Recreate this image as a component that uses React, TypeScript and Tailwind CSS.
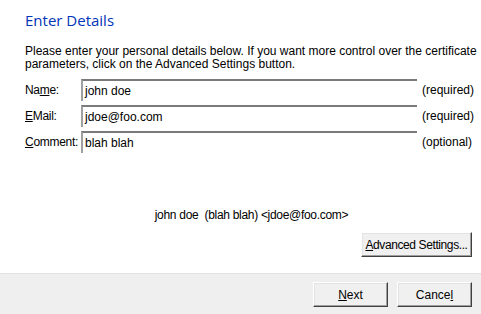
const font = { fontFamily: "'Liberation Sans', Tahoma, Arial, sans-serif" };

const Field = ({
  label,
  mnemonic,
  rest,
  value,
  hint,
}: {
  label: string;
  mnemonic: string;
  rest: string;
  value: string;
  hint: string;
}) => (
  <div className="flex items-center h-[26px]">
    <div className="w-[56px] shrink-0 text-[12px] tracking-[-0.3px] text-black">
      {label}
      <span className="underline">{mnemonic}</span>
      {rest}
    </div>
    <div className="w-[336px] shrink-0 h-[22px] border-t-2 border-l-2 border-t-[#7a7a7a] border-l-[#a0a0a0] bg-white flex items-center pl-[2px] text-[12px] text-black">
      {value}
    </div>
    <div className="ml-[5px] shrink-0 text-[12px] text-black whitespace-nowrap">{hint}</div>
  </div>
);

const WinButton = ({
  first,
  mn,
  rest,
  className,
}: {
  first: string;
  mn: string;
  rest: string;
  className: string;
}) => (
  <button
    className={
      "h-[25px] shrink-0 bg-[#f0f0f0] border border-t-white border-l-white border-r-[#404040] border-b-[#404040] shadow-[inset_-1px_-1px_0_#a0a0a0,inset_1px_1px_0_#e3e3e3] text-[12px] text-black text-center whitespace-nowrap px-0 " +
      className
    }
  >
    {first}
    <span className="underline">{mn}</span>
    {rest}
  </button>
);

export default function App() {
  return (
    <div className="w-[481px] h-[314px] bg-white flex flex-col overflow-hidden" style={font}>
      <div className="flex-1 pl-[25px] pr-[9px] pt-[10px]">
        <h1
          className="text-[15px] text-[#0035b8] leading-[20px]"
          style={{ fontFamily: "'Open Sans', 'Liberation Sans', sans-serif" }}
        >
          Enter Details
        </h1>
        <p className="mt-[15px] text-[12px] leading-[13px] text-black whitespace-nowrap">
          Please enter your personal details below. If you want more control over the certificate
          <br />
          parameters, click on the Advanced Settings button.
        </p>
        <div className="mt-[6px] flex flex-col">
          <Field label="Na" mnemonic="m" rest="e:" value="john doe" hint="(required)" />
          <Field label="" mnemonic="E" rest="Mail:" value="jdoe@foo.com" hint="(required)" />
          <Field label="" mnemonic="C" rest="omment:" value="blah blah" hint="(optional)" />
        </div>
        <div className="mt-[53px] leading-[14px] text-center text-[12px] tracking-[-0.3px] text-black pl-[6px]">
          john doe&nbsp; (blah blah) &lt;jdoe@foo.com&gt;
        </div>
        <div className="mt-[10px] flex justify-end">
          <WinButton first="" mn="A" rest="dvanced Settings..." className="w-[111px] tracking-[-0.4px]" />
        </div>
      </div>
      <div className="h-[41px] shrink-0 bg-[#efefef] border-t border-[#e3e3e3] flex items-start justify-end gap-[9px] pr-[9px] pt-[8px]">
        <WinButton first="" mn="N" rest="ext" className="w-[75px]" />
        <WinButton first="Cance" mn="l" rest="" className="w-[75px]" />
      </div>
    </div>
  );
}
